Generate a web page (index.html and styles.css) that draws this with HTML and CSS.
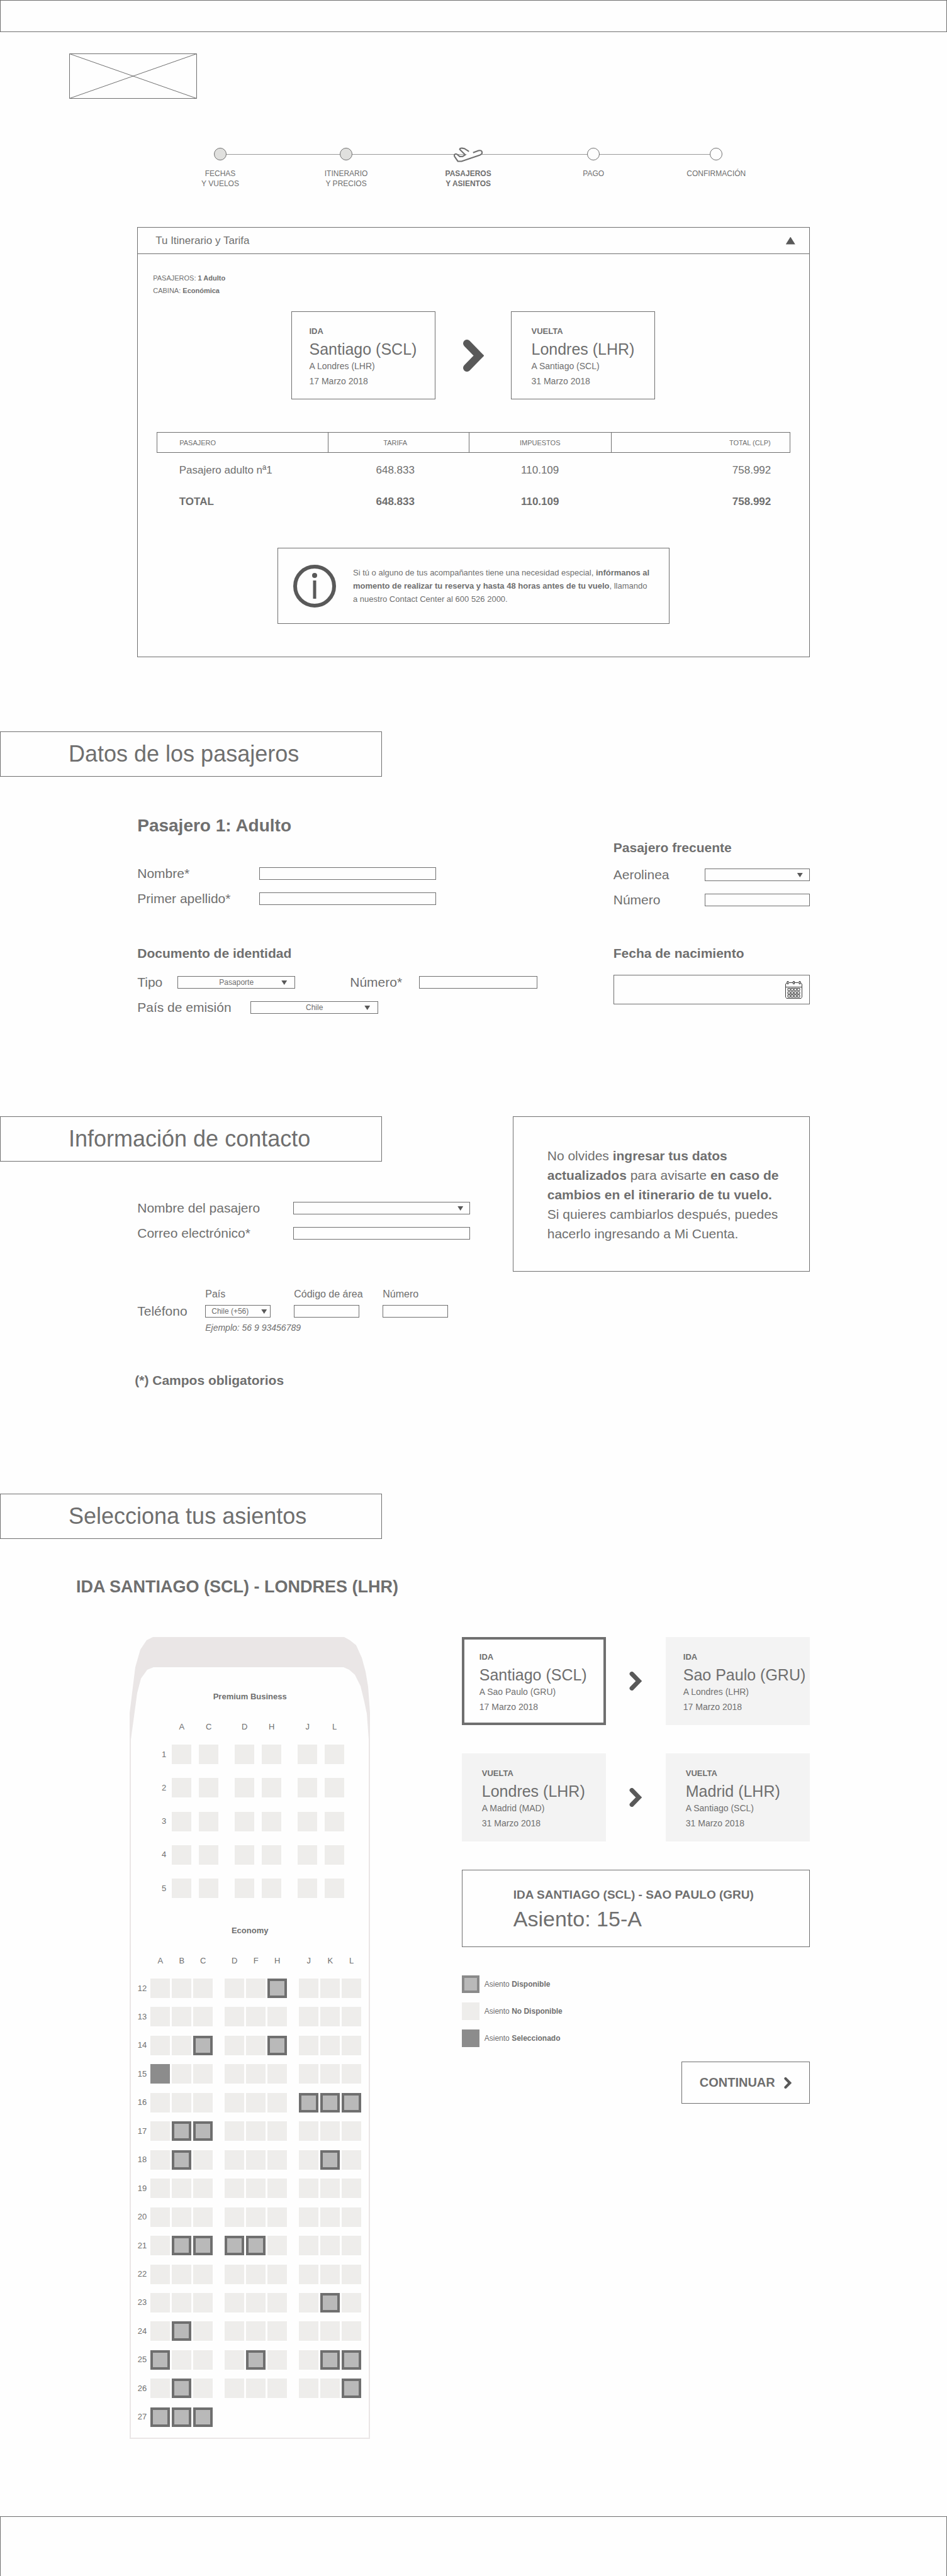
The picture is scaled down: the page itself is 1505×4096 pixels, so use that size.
FILE: index.html
```html
<!DOCTYPE html>
<html lang="es">
<head>
<meta charset="utf-8">
<meta name="viewport" content="width=device-width, initial-scale=1">
<title>Pasajeros y asientos</title>
<link rel="stylesheet" href="styles.css">
</head>
<body>
<svg class="sprite" aria-hidden="true">
  <symbol id="chevron" viewBox="0 0 34 51" preserveAspectRatio="none">
    <path d="M7 6 26 25.500 7 45" fill="none" stroke="currentColor" stroke-width="12" stroke-linecap="round" stroke-linejoin="miter"/>
  </symbol>
</svg>

<header class="topbar"></header>

<main>
  <svg class="logo" viewBox="0 0 203 72" role="img" aria-label="Logo">
    <path d="M.5.5h202v71H.5zM.5.5l202 71M202.500.5l-202 71" fill="none" stroke="currentColor"/>
  </svg>

  <ol class="steps">
    <li class="step"><span class="marker"><span class="dot dot-done"></span></span>FECHAS<br>Y VUELOS</li>
    <li class="step"><span class="marker"><span class="dot dot-done"></span></span>ITINERARIO<br>Y PRECIOS</li>
    <li class="step step-current" aria-current="step">
      <span class="marker">
        <svg class="takeoff" viewBox="50 30 190 100" aria-hidden="true">
          <path class="takeoff-fill" d="M208 59C222 55 230 60 230 70C230 80 226 82 215 87L105 124H82L64 98C58 90 60 84 64 81C70 77 76 80 80 84L94 95L112 94L127 84L175 71Z"/>
          <path d="M175 71L208 59C222 55 230 60 230 70C230 80 226 82 215 87L105 124H82L64 98C58 90 60 84 64 81C70 77 76 80 80 84L94 95L112 94L127 84L94 52C92 46 100 43 108 44L122 46L150 64" fill="none" stroke="currentColor" stroke-width="8"/>
        </svg>
      </span>PASAJEROS<br>Y ASIENTOS</li>
    <li class="step"><span class="marker"><span class="dot"></span></span>PAGO</li>
    <li class="step"><span class="marker"><span class="dot"></span></span>CONFIRMACIÓN</li>
  </ol>

  <section class="container panel">
    <div class="panel-head">
      <h2 class="panel-title">Tu Itinerario y Tarifa</h2>
      <button class="panel-toggle" type="button" aria-label="Contraer" aria-expanded="true"></button>
    </div>
    <div class="panel-body">
      <p class="summary">PASAJEROS: <b>1 Adulto</b><br>CABINA: <b>Económica</b></p>
      <div class="route">
        <article class="flight flight-outline">
          <h3 class="flight-kind">IDA</h3>
          <p class="flight-city">Santiago (SCL)</p>
          <p class="flight-info">A Londres (LHR)<br>17 Marzo 2018</p>
        </article>
        <svg class="arrow arrow-large" aria-hidden="true"><use href="#chevron"/></svg>
        <article class="flight flight-outline flight-return">
          <h3 class="flight-kind">VUELTA</h3>
          <p class="flight-city">Londres (LHR)</p>
          <p class="flight-info">A Santiago (SCL)<br>31 Marzo 2018</p>
        </article>
      </div>
      <table class="fares">
        <thead>
          <tr><th class="fare-name" scope="col">PASAJERO</th><th class="fare-base" scope="col">TARIFA</th><th class="fare-tax" scope="col">IMPUESTOS</th><th class="fare-total" scope="col">TOTAL (CLP)</th></tr>
        </thead>
        <tbody>
          <tr><td class="fare-name">Pasajero adulto nª1</td><td class="fare-base">648.833</td><td class="fare-tax">110.109</td><td class="fare-total">758.992</td></tr>
          <tr class="fares-sum"><td class="fare-name">TOTAL</td><td class="fare-base">648.833</td><td class="fare-tax">110.109</td><td class="fare-total">758.992</td></tr>
        </tbody>
      </table>
      <div class="info">
        <svg class="info-icon" viewBox="0 0 68 68" aria-hidden="true">
          <circle cx="34" cy="34" r="31" fill="none" stroke="currentColor" stroke-width="6"/>
          <circle cx="34" cy="17" r="4" fill="currentColor"/>
          <path d="M34 25v29" stroke="currentColor" stroke-width="5"/>
        </svg>
        <p>Si tú o alguno de tus acompañantes tiene una necesidad especial, <b>infórmanos al</b><br><b>momento de realizar tu reserva y hasta 48 horas antes de tu vuelo</b>, llamando<br>a nuestro Contact Center al 600 526 2000.</p>
      </div>
    </div>
  </section>

  <section class="block block-passengers">
    <h2 class="block-title">Datos de los pasajeros</h2>
    <form class="container passenger-form">
      <div>
        <h3 class="passenger-title">Pasajero 1: Adulto</h3>
        <div class="field"><label class="label-name" for="nombre">Nombre*</label><input class="control control-long" id="nombre" type="text"></div>
        <div class="field"><label class="label-name" for="apellido">Primer apellido*</label><input class="control control-long" id="apellido" type="text"></div>
      </div>
      <div class="frequent">
        <h3 class="group-title">Pasajero frecuente</h3>
        <div class="field"><label for="aerolinea">Aerolinea</label><span class="select select-airline"><select class="control" id="aerolinea"><option></option></select></span></div>
        <div class="field"><label for="numero-frecuente">Número</label><input class="control control-airline" id="numero-frecuente" type="text"></div>
      </div>
      <div class="document">
        <h3 class="group-title">Documento de identidad</h3>
        <div class="field">
          <label class="label-type" for="tipo">Tipo</label><span class="select select-type"><select class="control" id="tipo"><option>Pasaporte</option></select></span>
          <label class="label-number" for="numero-doc">Número*</label><input class="control control-number" id="numero-doc" type="text">
        </div>
        <div class="field"><label class="label-country" for="pais-emision">País de emisión</label><span class="select select-country"><select class="control" id="pais-emision"><option>Chile</option></select></span></div>
      </div>
      <div class="birth">
        <h3 class="group-title"><label for="nacimiento">Fecha de nacimiento</label></h3>
        <div class="date">
          <input class="date-input" id="nacimiento" type="text">
          <svg class="calendar" viewBox="0 0 27 28" aria-hidden="true" fill="none" stroke="currentColor">
            <path d="M3 2.500H2.500L.5 5v20.500l1.500 2h23l1.500-2V5l-2-2.500H24M6 2.500h6M15 2.500h6M.5 9.500h26M3 .5h2v4H3zM12.500.5h2v4h-2zM22 .5h2v4h-2z"/>
            <path d="M4 11.500h4v3.500H4zM9 11.500h4v3.500H9zM14 11.500h4v3.500h-4zM19 11.500h4v3.500h-4zM4 17h4v3.500H4zM9 17h4v3.500H9zM14 17h4v3.500h-4zM19 17h4v3.500h-4zM4 22h4v3.500H4zM9 22h4v3.500H9zM14 22h4v3.500h-4zM19 22h4v3.500h-4z"/>
          </svg>
        </div>
      </div>
    </form>
  </section>

  <section class="block block-contact">
    <h2 class="block-title">Información de contacto</h2>
    <div class="container contact">
      <form class="contact-form">
        <div class="field"><label class="label-contact" for="pasajero">Nombre del pasajero</label><span class="select select-passenger"><select class="control" id="pasajero"><option></option></select></span></div>
        <div class="field"><label class="label-contact" for="correo">Correo electrónico*</label><input class="control control-long" id="correo" type="email"></div>
        <div class="phone" role="group" aria-labelledby="telefono">
          <span class="phone-title" id="telefono">Teléfono</span>
          <label class="phone-label phone-country" for="tel-pais">País</label>
          <label class="phone-label phone-area" for="tel-area">Código de área</label>
          <label class="phone-label phone-number" for="tel-numero">Número</label>
          <span class="select select-code phone-country"><select class="control" id="tel-pais"><option>Chile (+56)</option></select></span>
          <input class="control phone-area" id="tel-area" type="text">
          <input class="control phone-number" id="tel-numero" type="tel">
          <p class="phone-hint">Ejemplo: 56 9 93456789</p>
        </div>
        <p class="required-note">(*) Campos obligatorios</p>
      </form>
      <aside class="notice">No olvides <b>ingresar tus datos<br>actualizados</b> para avisarte <b>en caso de<br>cambios en el itinerario de tu vuelo.</b><br>Si quieres cambiarlos después, puedes<br>hacerlo ingresando a Mi Cuenta.</aside>
    </div>
  </section>

  <section class="block block-seats">
    <h2 class="block-title">Selecciona tus asientos</h2>
    <h3 class="leg-title">IDA SANTIAGO (SCL) - LONDRES (LHR)</h3>
    <div class="container seating">
      <div class="plane">
        <div class="hull" aria-hidden="true">
          <svg class="nose" viewBox="0 0 382 163" preserveAspectRatio="none">
            <path fill="currentColor" fill-rule="evenodd" d="M0 163V121L9 48L17 20L27 5L37 0H341L350 5L360 13L369 33L375 55L379 79L382 120V163H380L377 122L373 103L367 78L358 60L349 52L340 48H38L28 52L18 66L12 89L2 163Z"/>
          </svg>
          <div class="hull-body"></div>
        </div>
        <div class="cabin">
          <h4 class="cabin-title">Premium Business</h4>
          <div class="seat-map seat-map-business" id="business"></div>
          <h4 class="cabin-title">Economy</h4>
          <div class="seat-map seat-map-economy" id="economy"></div>
        </div>
      </div>
      <div class="selection">
        <div class="legs">
          <article class="flight flight-active">
            <h4 class="flight-kind">IDA</h4>
            <p class="flight-city">Santiago (SCL)</p>
            <p class="flight-info">A Sao Paulo (GRU)<br>17 Marzo 2018</p>
          </article>
          <svg class="arrow" aria-hidden="true"><use href="#chevron"/></svg>
          <article class="flight flight-muted">
            <h4 class="flight-kind">IDA</h4>
            <p class="flight-city">Sao Paulo (GRU)</p>
            <p class="flight-info">A Londres (LHR)<br>17 Marzo 2018</p>
          </article>
        </div>
        <div class="legs">
          <article class="flight flight-muted flight-return">
            <h4 class="flight-kind">VUELTA</h4>
            <p class="flight-city">Londres (LHR)</p>
            <p class="flight-info">A Madrid (MAD)<br>31 Marzo 2018</p>
          </article>
          <svg class="arrow" aria-hidden="true"><use href="#chevron"/></svg>
          <article class="flight flight-muted flight-return">
            <h4 class="flight-kind">VUELTA</h4>
            <p class="flight-city">Madrid (LHR)</p>
            <p class="flight-info">A Santiago (SCL)<br>31 Marzo 2018</p>
          </article>
        </div>
        <div class="chosen">
          <h4 class="chosen-leg">IDA SANTIAGO (SCL) - SAO PAULO (GRU)</h4>
          <p class="chosen-seat">Asiento: 15-A</p>
        </div>
        <div>
          <ul class="legend">
            <li><span class="swatch swatch-free"></span><span>Asiento <b>Disponible</b></span></li>
            <li><span class="swatch"></span><span>Asiento <b>No Disponible</b></span></li>
            <li><span class="swatch swatch-selected"></span><span>Asiento <b>Seleccionado</b></span></li>
          </ul>
          <button class="continue" type="submit">CONTINUAR<svg class="arrow arrow-small" aria-hidden="true"><use href="#chevron"/></svg></button>
        </div>
      </div>
    </div>
  </section>
</main>

<footer class="bottombar"></footer>
<script src="seats.js"></script>
</body>
</html>
```

FILE: styles.css
```css
:root {
  --ink: #6f6f6f;
  --dark: #595959;
  --seat: #eeedeb;
  --hull: #eae6e6;
}

* { box-sizing: border-box; }

body {
  margin: 0;
  background: #fefefe;
  color: var(--ink);
  font: 21px/24px "Liberation Sans", Arial, sans-serif;
}

h2, h3, h4, p, ol, ul { margin: 0; padding: 0; font-size: inherit; font-weight: normal; }
ol, ul { list-style: none; }
input, select, button { font-family: inherit; color: inherit; }

.sprite { display: none; }
.container { width: 71%; max-width: 1280px; margin: 0 auto; }

.topbar { height: 51px; border: 1px solid var(--ink); }
.bottombar { height: 95px; margin-top: 123px; border: 1px solid var(--ink); border-bottom: 0; }

.logo { display: block; width: 203px; height: 72px; margin: 34px 0 75px 110px; }

/* Progress steps */
.steps {
  position: relative;
  display: grid;
  grid-template-columns: 200fr 200fr 188fr 210fr 180fr;
  width: 65%;
  min-height: 68px;
  margin-left: 250px;
  font-size: 12px;
  line-height: 16px;
  text-align: center;
}
.steps::before {
  content: "";
  position: absolute;
  top: 13px;
  left: 100px;
  right: 90px;
  border-top: 1px solid #9a9a9a;
}
.step { position: relative; }
.step-current { font-weight: bold; }
.marker { display: flex; align-items: center; justify-content: center; height: 26px; margin-bottom: 10px; }
.dot { width: 20px; height: 20px; border: 1px solid var(--ink); border-radius: 50%; background: #fefefe; }
.dot-done { background: #e0e0de; }
.takeoff { width: 50px; height: 26px; }
.takeoff-fill { fill: #fefefe; }

/* Itinerary panel */
.panel { margin-top: 61px; border: 1px solid var(--ink); }
.panel-head { display: flex; align-items: center; justify-content: space-between; height: 42px; padding: 0 22px 0 28px; border-bottom: 1px solid var(--ink); }
.panel-title { font-size: 17px; }
.panel-toggle { width: 15px; height: 12px; padding: 0; border: 0; background: var(--dark); clip-path: polygon(50% 0, 100% 100%, 0 100%); }
.panel-body { padding: 28px 0 52px; }
.summary { padding-left: 24px; font-size: 11px; line-height: 20px; }

.route { display: flex; align-items: center; justify-content: center; gap: 43px; margin: 23px 0 52px; }
.flight { width: 229px; padding: 22px 0 17px 28px; white-space: nowrap; }
.flight-return { padding-left: 32px; }
.flight-outline { box-shadow: inset 0 0 0 1px var(--ink); }
.flight-active { box-shadow: inset 0 0 0 4px var(--ink); }
.flight-muted { background: #f3f3f3; }
.flight-kind { margin-bottom: 3px; font-size: 13px; font-weight: bold; line-height: 20px; }
.flight-city { font-size: 25px; line-height: 30px; }
.flight-info { font-size: 14px; line-height: 24px; }
.arrow { flex: none; width: 20px; height: 30px; color: var(--dark); }
.arrow-large { width: 34px; height: 51px; }
.arrow-small { width: 12px; height: 18px; }

.fares { width: calc(100% - 60px); margin: 0 auto; border-collapse: collapse; table-layout: fixed; font-size: 17px; line-height: 20px; }
.fares th { height: 32px; padding: 0; border: 1px solid var(--ink); font-size: 11px; font-weight: normal; }
.fares td { padding: 18px 0 12px; text-align: center; }
.fares .fare-name { width: 27%; padding-left: 35px; text-align: left; }
.fares .fare-base { width: 224px; padding-right: 10px; }
.fares .fare-tax { width: 226px; }
.fares .fare-total { padding-right: 30px; text-align: right; }
.fares-sum { font-weight: bold; }

.info { display: flex; align-items: center; gap: 27px; width: 623px; max-width: 100%; height: 121px; margin: 51px auto 0; padding: 0 24px; border: 1px solid var(--ink); font-size: 13px; line-height: 21px; white-space: nowrap; }
.info-icon { flex: none; width: 68px; height: 68px; color: var(--dark); }

/* Sections */
.block-title { display: flex; align-items: center; width: 607px; max-width: 100%; height: 72px; padding-left: 108px; border: 1px solid var(--ink); font-size: 36px; line-height: 40px; }
.block-passengers { margin-top: 118px; }
.block-contact { margin-top: 161px; }
.block-seats { margin-top: 168px; }

.field { display: flex; align-items: center; }
.field + .field { margin-top: 16px; }
.control { display: block; width: 100%; height: 20px; margin: 0; padding: 0 9px; border: 1px solid var(--ink); border-radius: 0; background: #fefefe; font-size: 12px; line-height: 18px; appearance: none; }
.select { position: relative; display: block; }
.select::after { content: ""; position: absolute; top: 7px; right: 11px; width: 9px; height: 7px; background: var(--dark); clip-path: polygon(0 0, 100% 0, 50% 100%); pointer-events: none; }
.control-long, .select-passenger { width: 281px; }
.control-airline, .select-airline { width: 167px; }
.control-number { width: 188px; }
.select-type { width: 187px; }
.select-country { width: 203px; }
.select-type::after, .select-country::after { right: 13px; }
.select-type .control, .select-country .control { text-align-last: center; }
.label-name { width: 194px; }
.label-type { width: 64px; }
.label-number { width: 110px; margin-left: 87px; }
.label-country { width: 180px; }
.label-contact { width: 248px; }

.passenger-form { display: grid; grid-template-columns: auto 312px; justify-content: space-between; row-gap: 61px; padding-top: 61px; }
.passenger-title { margin-bottom: 47px; font-size: 28px; font-weight: bold; line-height: 34px; }
.group-title { margin-bottom: 22px; font-weight: bold; }
.frequent { padding-top: 40px; }
.frequent .group-title { margin-bottom: 19px; }
.frequent .field { justify-content: space-between; }
.date { display: flex; align-items: center; height: 47px; padding-right: 11px; border: 1px solid var(--ink); }
.date-input { flex: 1; min-width: 0; height: 100%; border: 0; background: none; font-size: 21px; }
.calendar { width: 27px; height: 28px; color: #3a3a3a; }

.contact { display: flex; align-items: flex-start; justify-content: space-between; }
.contact-form { padding-top: 62px; }
.phone { display: grid; grid-template-columns: 71px 104px 104px 104px; grid-template-rows: 20px 20px 18px; gap: 7px 37px; margin-top: 75px; font-size: 16px; line-height: 20px; }
.phone-title { grid-area: 2 / 1; font-size: 21px; }
.phone-country { grid-column: 2; }
.phone-area { grid-column: 3; }
.phone-number { grid-column: 4; }
.phone-label { grid-row: 1; white-space: nowrap; }
.phone .control, .select-code { grid-row: 2; }
.select-code::after { right: 6px; }
.phone-hint { grid-row: 3; grid-column: 2 / -1; font-size: 14px; font-style: italic; line-height: 18px; }
.required-note { margin: 63px 0 0 -4px; font-weight: bold; }
.notice { width: 472px; height: 247px; margin-top: -72px; padding: 46px 0 0 54px; border: 1px solid var(--ink); line-height: 31px; white-space: nowrap; }

/* Seat selection */
.leg-title { padding: 60px 0 64px 121px; font-size: 27px; font-weight: bold; line-height: 32px; }
.seating { display: flex; align-items: flex-start; justify-content: space-between; }
.plane { display: grid; width: 382px; margin-left: -12px; }
.hull, .cabin { grid-area: 1 / 1; }
.hull { display: flex; flex-direction: column; color: var(--hull); }
.nose { display: block; width: 100%; height: 163px; }
.hull-body { flex: 1; border: 2px solid var(--hull); border-top: 0; }
.cabin { padding: 87px 0 19px; font-size: 13px; line-height: 16px; }
.cabin-title { margin-bottom: 32px; font-weight: bold; text-align: center; }
.seat-map { margin-bottom: 44px; }
.seat-map:last-child { margin-bottom: 0; }
.seat-rows { display: flex; flex-direction: column; justify-content: space-between; }
.seat-row { display: flex; align-items: center; }
.seat-letters { margin-bottom: 20px; text-align: center; }
.row-number { text-align: right; }
.seat-group { display: flex; }
.seat { width: 31px; height: 31px; padding: 0; border: 0; background: var(--seat); }
.seat-free { border: 4px solid var(--ink); background: #b9b9b9; }
.seat-selected { background: #8c8c8c; }
.column-letter { width: 31px; }

.seat-map-business .row-number { width: 58px; margin-right: 9px; }
.seat-map-business .seat-group { gap: 12px; margin-right: 26px; }
.seat-map-business .seat-rows { min-height: 244px; }
.seat-map-economy .row-number { width: 27px; margin-right: 6px; }
.seat-map-economy .seat-group { gap: 3px; margin-right: 19px; }
.seat-map-economy .seat-rows { min-height: 713px; }
.seat-row .seat-group:last-child { margin-right: 0; }

.selection { display: flex; flex-direction: column; gap: 45px; width: 553px; }
.legs { display: flex; align-items: center; justify-content: space-between; }
.chosen { padding: 27px 0 24px 81px; border: 1px solid var(--ink); white-space: nowrap; }
.chosen-leg { margin-bottom: 6px; font-size: 19px; font-weight: bold; }
.chosen-seat { font-size: 34px; line-height: 40px; }
.legend { display: grid; gap: 15px; font-size: 12px; line-height: 16px; }
.legend li { display: flex; align-items: center; gap: 8px; }
.swatch { width: 28px; height: 28px; background: var(--seat); }
.swatch-free { border: 4px solid #8a8a8a; background: #b9b9b9; }
.swatch-selected { background: #8c8c8c; }
.continue { display: flex; align-items: center; justify-content: center; gap: 14px; width: 204px; height: 67px; margin: 23px 0 0 auto; padding: 0; border: 1px solid var(--ink); background: #fefefe; font-size: 20px; font-weight: bold; }
```

FILE: seats.js
```js
// Seat maps: column groups, rows, and the state of each seat that is not taken.
const cabins = [
  { id: "business", groups: ["AC", "DH", "JL"], first: 1, last: 5, free: {} },
  {
    id: "economy", groups: ["ABC", "DFH", "JKL"], first: 12, last: 27,
    free: { 12: "H", 14: "CH", 16: "JKL", 17: "BC", 18: "BK", 21: "BCDF", 23: "K", 24: "B", 25: "AFKL", 26: "BL", 27: "ABC" },
    shortRow: 27
  }
];
const selected = "15A";

function element(tag, className, text) {
  const node = document.createElement(tag);
  node.className = className;
  if (text !== undefined) node.textContent = text;
  return node;
}

function buildRow(label, groups, makeCell, extraClass) {
  const row = element("div", "seat-row" + (extraClass || ""));
  row.append(element("span", "row-number", label));
  groups.forEach(letters => {
    const group = element("div", "seat-group");
    [...letters].forEach(letter => group.append(makeCell(letter)));
    row.append(group);
  });
  return row;
}

cabins.forEach(cabin => {
  const map = document.getElementById(cabin.id);
  map.append(buildRow("", cabin.groups, letter => element("span", "column-letter", letter), " seat-letters"));
  const rows = element("div", "seat-rows");
  for (let n = cabin.first; n <= cabin.last; n++) {
    const groups = n === cabin.shortRow ? cabin.groups.slice(0, 1) : cabin.groups;
    rows.append(buildRow(n, groups, letter => {
      const isFree = (cabin.free[n] || "").includes(letter);
      const isSelected = n + letter === selected;
      const seat = element("button", "seat" + (isFree ? " seat-free" : "") + (isSelected ? " seat-selected" : ""));
      seat.type = "button";
      seat.disabled = !isFree && !isSelected;
      seat.setAttribute("aria-label", "Asiento " + n + "-" + letter);
      return seat;
    }));
  }
  map.append(rows);
});
```
